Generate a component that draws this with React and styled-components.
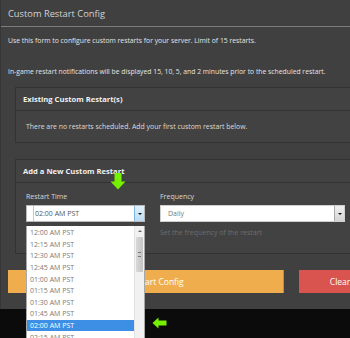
import React from 'react';
import styled, { createGlobalStyle } from 'styled-components';

const GlobalStyle = createGlobalStyle`
    html, body {
        margin: 0;
        padding: 0;
        background: #0b0b0b;
        overflow: hidden;
        font-family: 'Open Sans', 'Liberation Sans', sans-serif;
    }
`

const Page = styled.div`
    position: relative;
    width: 350px;
    height: 338px;
    overflow: hidden;
`

const Modal = styled.div`
    width: 390px;
    height: 309px;
    background-color: #404040;
    border-left: 1px solid #363636;
    box-sizing: border-box;
`

const ModalHeader = styled.div`
    height: 27px;
    display: flex;
    align-items: center;
    padding-left: 7px;
    border-bottom: 1px solid #7c7c7c;
    box-sizing: border-box;
    font-size: 9.3px;
    color: #d2d2d2;
`

const ModalBody = styled.div`
    padding: 9px 8px 0 7px;
`

const Note = styled.p`
    margin: 0 0 ${p => p.gap}px 0;
    font-size: 6.8px;
    line-height: 10px;
    color: #e4e4e4;
`

const Panel = styled.div`
    margin-left: 7px;
    margin-bottom: ${p => p.gap}px;
    border: 1px solid #333;
    background-color: #424242;
`

const PanelHeading = styled.div`
    height: 22px;
    display: flex;
    align-items: center;
    padding-left: 7px;
    border-bottom: 1px solid #333;
    font-size: 7.6px;
    font-weight: bold;
    color: #f0f0f0;
`

const PanelBody = styled.div`
    padding: ${p => p.pad};
    font-size: 6.9px;
    color: #dcdcdc;
`

const FormRow = styled.div`
    display: flex;
    gap: 15px;
`

const Field = styled.div`
    position: relative;
    width: ${p => p.width}px;
`

const Label = styled.div`
    font-size: 7px;
    color: #d8d8d8;
    margin-bottom: 4px;
`

const Select = styled.div`
    display: flex;
    height: 17px;
    background: #fff;
    border: 1px solid ${p => p.open ? '#b9b9b9' : '#cfcfcf'};
    box-sizing: border-box;
`

const SelectValue = styled.div`
    flex: 1;
    display: flex;
    align-items: center;
    padding-left: ${p => p.open ? 2 : 7}px;
    font-size: 7px;
    color: ${p => p.open ? '#555' : '#777'};
    border-left: ${p => p.open ? '6px solid #fff' : 'none'};
    box-shadow: ${p => p.open ? 'inset 1px 0 0 #c8c8c8' : 'none'};
`

const SelectArrow = styled.div`
    width: 9px;
    display: flex;
    align-items: center;
    justify-content: center;
    background: ${p => p.open
        ? 'linear-gradient(#e3f1fb, #b9dcf4)'
        : 'linear-gradient(#f0f0f0, #d4d4d4)'};
    border-left: 1px solid ${p => p.open ? '#7fb6e6' : '#aaa'};

    &::after {
        content: '';
        border-left: 2px solid transparent;
        border-right: 2px solid transparent;
        border-top: 2px solid #111;
    }
`

const Help = styled.div`
    margin-top: 6px;
    font-size: 7px;
    color: #6d6d6d;
`

const ButtonRow = styled.div`
    display: flex;
    gap: 15px;
    margin-top: 16px;
`

const Button = styled.div`
    width: ${p => p.width}px;
    flex-shrink: 0;
    height: 23px;
    display: flex;
    align-items: center;
    justify-content: center;
    background-color: ${p => p.color};
    border-right: 1px solid ${p => p.edge};
    box-sizing: border-box;
    font-size: 8.5px;
    color: #fff;
`

const DropList = styled.div`
    position: absolute;
    left: 0;
    top: 34px;
    width: 119px;
    height: 130px;
    display: flex;
    background: #fff;
    border: 1px solid #a8a8a8;
    border-top: none;
    box-sizing: border-box;
    z-index: 5;
`

const Options = styled.div`
    flex: 1;
    padding-top: 1px;
`

const Option = styled.div`
    height: 11.6px;
    display: flex;
    align-items: center;
    padding-left: 3px;
    font-size: 7px;
    color: ${p => p.selected ? '#fff' : '#7a7a7a'};
    background: ${p => p.selected ? '#3d8fe6' : 'transparent'};
`

const Scrollbar = styled.div`
    width: 9px;
    background: #f1f1f1;
    border-left: 1px solid #e2e2e2;
    display: flex;
    flex-direction: column;
    align-items: center;
`

const ScrollUp = styled.div`
    margin-top: 4px;
    border-left: 2px solid transparent;
    border-right: 2px solid transparent;
    border-bottom: 2px solid #666;
`

const ScrollThumb = styled.div`
    margin-top: 5px;
    width: 7px;
    height: 35px;
    background: linear-gradient(90deg, #d8d8d8, #c4c4c4);
    border-radius: 1px;
    display: flex;
    align-items: center;
    justify-content: center;

    &::after {
        content: '';
        width: 3px;
        height: 3px;
        border-top: 1px solid #777;
        border-bottom: 1px solid #777;
    }
`

const Pointer = styled.svg`
    position: absolute;
    left: ${p => p.x}px;
    top: ${p => p.y}px;
    z-index: 6;
`

const times = [
    '12:00 AM PST', '12:15 AM PST', '12:30 AM PST', '12:45 AM PST',
    '01:00 AM PST', '01:15 AM PST', '01:30 AM PST', '01:45 AM PST',
    '02:00 AM PST', '02:15 AM PST'
]

export default function App() {
    return (
        <Page>
            <GlobalStyle />
            <Modal>
                <ModalHeader>Custom Restart Config</ModalHeader>
                <ModalBody>
                    <Note gap={21}>Use this form to configure custom restarts for your server. Limit of 15 restarts.</Note>
                    <Note gap={10}>In-game restart notifications will be displayed 15, 10, 5, and 2 minutes prior to the scheduled restart.</Note>
                    <Panel gap={16}>
                        <PanelHeading>Existing Custom Restart(s)</PanelHeading>
                        <PanelBody pad="11px 10px 11px 10px">There are no restarts scheduled. Add your first custom restart below.</PanelBody>
                    </Panel>
                    <Panel gap={0}>
                        <PanelHeading>Add a New Custom Restart</PanelHeading>
                        <PanelBody pad="9px 10px 16px 10px">
                            <FormRow>
                                <Field width={119}>
                                    <Label>Restart Time</Label>
                                    <Select open>
                                        <SelectValue open>02:00 AM PST</SelectValue>
                                        <SelectArrow open />
                                    </Select>
                                    <DropList>
                                        <Options>
                                            {times.map(t => (
                                                <Option key={t} selected={t === '02:00 AM PST'}>{t}</Option>
                                            ))}
                                        </Options>
                                        <Scrollbar>
                                            <ScrollUp />
                                            <ScrollThumb />
                                        </Scrollbar>
                                    </DropList>
                                </Field>
                                <Field width={185}>
                                    <Label>Frequency</Label>
                                    <Select>
                                        <SelectValue>Daily</SelectValue>
                                        <SelectArrow />
                                    </Select>
                                    <Help>Set the frequency of the restart</Help>
                                </Field>
                            </FormRow>
                        </PanelBody>
                    </Panel>
                    <ButtonRow>
                        <Button width={276} color="#f0ad4e" edge="#c98a37">Save Restart Config</Button>
                        <Button width={95} color="#d9534f" edge="#d9534f">Clear All</Button>
                    </ButtonRow>
                </ModalBody>
            </Modal>
            <Pointer x={110} y={173} width="16" height="17" viewBox="0 0 16 17">
                <path d="M4.5 0 H11.5 V8.5 H15.5 L8 16.5 L0.5 8.5 H4.5 Z" fill="#74f000" />
            </Pointer>
            <Pointer x={152} y={317} width="15" height="12" viewBox="0 0 15 12">
                <path d="M0.5 6 L6.5 0.5 V3.5 H14.5 V8.5 H6.5 V11.5 Z" fill="#74f000" />
            </Pointer>
        </Page>
    );
}
